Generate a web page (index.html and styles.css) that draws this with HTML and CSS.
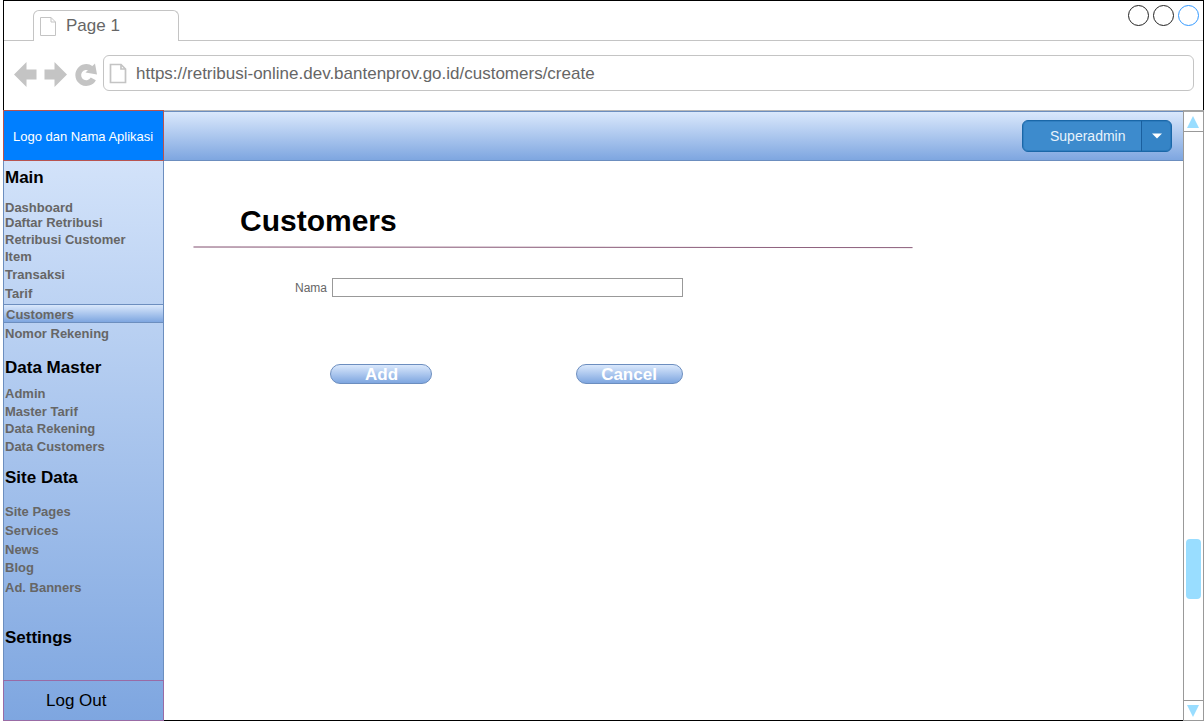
FILE: index.html
```html
<!DOCTYPE html>
<html lang="id">
<head>
<meta charset="utf-8">
<title>Customers</title>
<link rel="stylesheet" href="styles.css">
</head>
<body>
<div class="window">
  <header class="chrome">
    <div class="tabs">
      <div class="tab">
        <svg class="tab-icon" width="17" height="20" viewBox="0 0 17 20"><path d="M.5 .5H11L15.500 5V18.500H.5ZM11 .5V5H15.500" fill="none" stroke="#c4c4c4"/></svg>
        <span>Page 1</span>
      </div>
      <div class="controls"><i class="dot"></i><i class="dot"></i><i class="dot dot-blue"></i></div>
    </div>
    <div class="toolbar">
      <svg class="nav-icons" width="84" height="26" viewBox="0 0 84 26">
        <path d="M0 12.500L12.500 0V7.500H22.500V17.500H12.500V25Z" fill="#c4c4c4"/>
        <path d="M53 12.500L40.500 0V7.500H30.500V17.500H40.500V25Z" fill="#c4c4c4"/>
        <path d="M79.300 16.800A8 8 0 1 1 77 6.600" fill="none" stroke="#c4c4c4" stroke-width="5.800"/>
        <path d="M81 1.500L83 12.500L71.500 10.500Z" fill="#c4c4c4"/>
      </svg>
      <div class="address">
        <svg width="18" height="21" viewBox="0 0 18 21"><path d="M1.500 1.500H12L16.500 6V19.500H1.500ZM12 1.500V6H16.500" fill="none" stroke="#c4c4c4" stroke-width="1.700"/></svg>
        <span>https://retribusi-online.dev.bantenprov.go.id/customers/create</span>
      </div>
    </div>
  </header>
  <div class="page">
    <aside class="sidebar">
      <div class="brand">Logo dan Nama Aplikasi</div>
      <nav class="menu">
        <div class="group group-main">
          <h2>Main</h2>
          <a>Dashboard</a><a>Daftar Retribusi</a><a>Retribusi Customer</a><a>Item</a><a>Transaksi</a><a>Tarif</a>
          <a class="active">Customers</a><a class="after-active">Nomor Rekening</a>
        </div>
        <div class="group group-master">
          <h2>Data Master</h2>
          <a>Admin</a><a>Master Tarif</a><a>Data Rekening</a><a>Data Customers</a>
        </div>
        <div class="group group-site">
          <h2>Site Data</h2>
          <a>Site Pages</a><a>Services</a><a>News</a><a>Blog</a><a>Ad. Banners</a>
        </div>
        <div class="group"><h2>Settings</h2></div>
      </nav>
      <div class="logout">Log Out</div>
    </aside>
    <div class="content">
      <div class="topbar">
        <div class="user">
          <span class="user-name">Superadmin</span>
          <span class="user-toggle"><svg width="10" height="6" viewBox="0 0 10 6"><path d="M0 .5H10L5 5.500Z" fill="#fff"/></svg></span>
        </div>
      </div>
      <main class="main">
        <h1>Customers</h1>
        <svg class="rule" width="720" height="3" viewBox="0 0 720 3"><path d="M.5 1L719.500 1.600" stroke="#996185"/><path d="M.5 1L719.500 1.600" stroke="#736b70" stroke-opacity=".25"/></svg>
        <div class="field"><label for="nama">Nama</label><input id="nama" type="text"></div>
        <div class="actions"><button class="add">Add</button><button class="cancel">Cancel</button></div>
      </main>
    </div>
    <div class="scrollbar">
      <div class="arrow arrow-up"><svg width="12" height="12" viewBox="0 0 12 12"><path d="M6 0L12 12H0Z" fill="#9df"/></svg></div>
      <div class="track"><div class="thumb"></div></div>
      <div class="arrow arrow-down"><svg width="12" height="12" viewBox="0 0 12 12"><path d="M0 0H12L6 12Z" fill="#9df"/></svg></div>
    </div>
  </div>
</div>
</body>
</html>
```
FILE: styles.css
```css
* { box-sizing: border-box; }
body { margin: 0; background: #fff; font-family: "Liberation Sans", Arial, sans-serif; overflow: hidden; }
h1, h2 { margin: 0; }
svg { display: block; flex: none; }

.window { margin-left: 3px; width: 1201px; height: 721px; display: flex; flex-direction: column; }
.chrome { height: 110px; border: 1px solid #000; border-bottom: 0; flex: none; color: #666; font-size: 17px; }
.tabs { height: 40px; padding: 9px 0 0 29px; display: flex; justify-content: space-between; box-shadow: inset 0 -1px #c4c4c4; }
.tab { width: 146px; height: 31px; border: 1px solid #c4c4c4; border-bottom: 0; border-radius: 6px 6px 0 0; background: #fff; display: flex; padding: 6px 0 0 6px; }
.tab span { margin-left: 9px; line-height: 18px; }
.controls { display: flex; gap: 4px; margin: -5px 4px 0 0; }
.dot { width: 21px; height: 21px; border: 1px solid #222; border-radius: 50%; }
.dot-blue { border-color: #39f; }
.toolbar { display: flex; padding: 14px 9px 0 10px; }
.nav-icons { margin-top: 7px; }
.address { margin-left: 5px; flex: 1; height: 36px; border: 1px solid #c4c4c4; border-radius: 6px; display: flex; align-items: center; padding-left: 5px; }
.address span { margin-left: 9px; padding-top: 2px; }

.page { flex: 1; display: flex; }
.sidebar { width: 161px; display: flex; flex-direction: column; background: linear-gradient(#dae8fc, #7ea6e0); flex: none; }
.brand { height: 51px; border: 1px solid #b85450; background: #007fff; color: #fff; font-size: 13px; line-height: 51px; padding-left: 9px; white-space: nowrap; flex: none; }
.menu { flex: 1; border: solid #6c8ebf; border-width: 0 1px; padding-top: 6px; }
.group { display: grid; color: #666; font-size: 13px; font-weight: bold; line-height: 15px; }
.group-main { grid-template-rows: 33px 15px 17px 17px 18px 19px 18px 19px 34px; }
.group-master { grid-template-rows: 29px 18px 17px 18px 28px; }
.group-site { grid-template-rows: 37px 19px 19px 18px 20px 47px; }
.group h2 { font-size: 17px; line-height: 22px; color: #000; }
.group h2, .group a { padding-left: 1px; }
.group .active { padding: 2px 0 0 2px; border: solid #6c8ebf; border-width: 1px 0; background: linear-gradient(#dae8fc, #7ea6e0); }
.group .after-active { padding-top: 3px; }
.logout { height: 41px; border: 1px solid #996ba5; font-size: 17px; line-height: 39px; padding-left: 42px; flex: none; }

.content { width: 1019px; display: flex; flex-direction: column; border-top: 1px solid #b8b8b8; border-bottom: 1px solid #000; }
.topbar { height: 50px; flex: none; border: solid #6c8ebf; border-width: 1px 0; background: linear-gradient(#dae8fc, #7ea6e0); display: flex; justify-content: flex-end; padding: 8px 11px 0 0; }
.user { width: 150px; height: 32px; border: 1px solid #1a67a8; border-radius: 6px; background: #3d8bcd; box-shadow: inset 0 0 0 1px rgba(26, 103, 168, .35); display: flex; }
.user-name { width: 118px; color: #e8f3fc; font-size: 14px; line-height: 31px; padding-left: 27px; }
.user-toggle { flex: 1; border-left: 1px solid #1a5f9e; border-radius: 0 5px 5px 0; background: rgba(26, 103, 168, .2); display: flex; justify-content: center; padding-top: 12px; }
.main { padding: 43px 0 0 29px; }
h1 { font-size: 30px; line-height: 34px; padding-left: 47px; }
.rule { margin: 8px 0 0; }
.field { margin-top: 29px; display: flex; align-items: center; padding-left: 102px; color: #666; font-size: 12px; }
.field input { margin: 0 0 0 5px; padding: 0 3px; width: 351px; height: 19px; border: 1px solid #999; background: #fff; }
.actions { display: flex; gap: 144px; margin: 67px 0 0 137px; }
button { height: 20px; padding: 1px 0 0; border: 1px solid #6c8ebf; border-radius: 10px; background: linear-gradient(#dae8fc, #7ea6e0); color: #fff; font: bold 17px/18px "Liberation Sans", Arial, sans-serif; }
.add { width: 102px; padding-left: 1px; }
.cancel { width: 107px; padding-right: 1px; }

.scrollbar { width: 21px; border: 1px solid #999; border-top: 2px solid #a6a6a6; display: flex; flex-direction: column; }
.arrow { height: 20px; display: flex; justify-content: center; align-items: center; padding-right: 1px; }
.arrow-up { border-bottom: 1px solid #999; }
.arrow-down { border-top: 1px solid #999; }
.track { flex: 1; padding: 407px 2px 0; }
.thumb { height: 60px; border-radius: 4px; background: #9df; }
```
